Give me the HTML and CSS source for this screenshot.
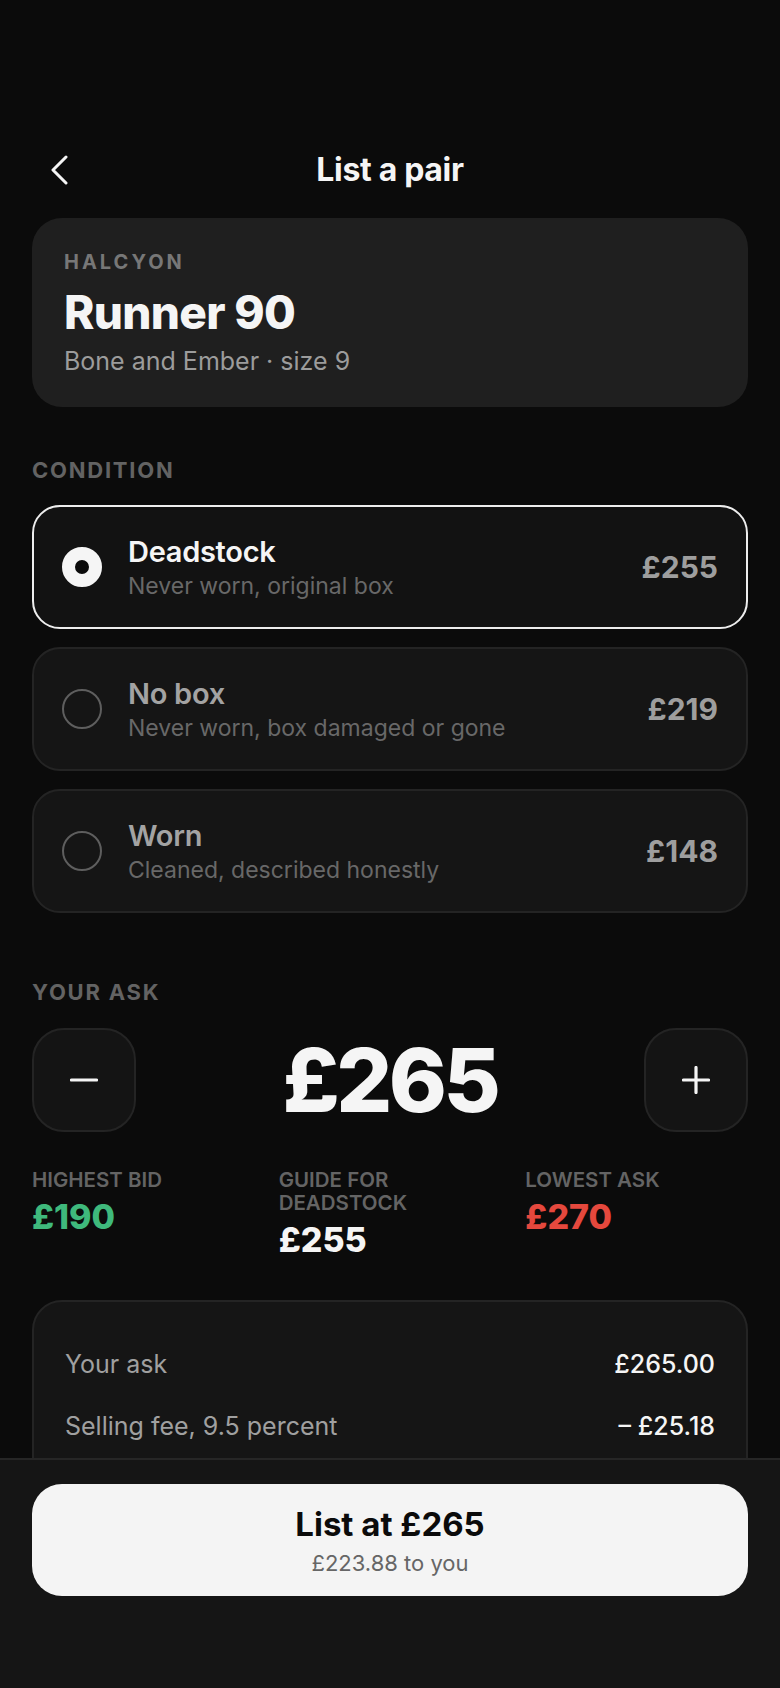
FILE: index.html
```html
<!DOCTYPE html>
<html lang="en">
<head>
<meta charset="utf-8">
<title>List a pair</title>
<link rel="stylesheet" href="styles.css">
</head>
<body>
<div class="screen">
  <header class="topbar">
    <button class="back" aria-label="Back">
      <svg width="18" height="30" viewBox="0 0 18 30" fill="none"><path d="M15 2 L2 15 L15 28" stroke="#f5f5f5" stroke-width="3" stroke-linecap="round" stroke-linejoin="round"/></svg>
    </button>
    <h1 class="title">List a pair</h1>
    <span class="spacer"></span>
  </header>

  <section class="product">
    <div class="brand">HALCYON</div>
    <div class="model">Runner 90</div>
    <div class="variant">Bone and Ember · size 9</div>
  </section>

  <div class="section-label cond-label">CONDITION</div>
  <div class="options">
    <div class="option selected">
      <span class="radio"></span>
      <div class="opt-text">
        <div class="opt-title">Deadstock</div>
        <div class="opt-sub">Never worn, original box</div>
      </div>
      <div class="opt-price">£255</div>
    </div>
    <div class="option">
      <span class="radio"></span>
      <div class="opt-text">
        <div class="opt-title">No box</div>
        <div class="opt-sub">Never worn, box damaged or gone</div>
      </div>
      <div class="opt-price">£219</div>
    </div>
    <div class="option">
      <span class="radio"></span>
      <div class="opt-text">
        <div class="opt-title">Worn</div>
        <div class="opt-sub">Cleaned, described honestly</div>
      </div>
      <div class="opt-price">£148</div>
    </div>
  </div>

  <div class="section-label ask-label">YOUR ASK</div>
  <div class="stepper">
    <button class="step" aria-label="Decrease">
      <svg width="28" height="28" viewBox="0 0 28 28"><path d="M1.5 14 H26.5" stroke="#f5f5f5" stroke-width="3.2" stroke-linecap="round"/></svg>
    </button>
    <div class="ask-value">£265</div>
    <button class="step" aria-label="Increase">
      <svg width="28" height="28" viewBox="0 0 28 28"><path d="M1.5 14 H26.5 M14 1.5 V26.5" stroke="#f5f5f5" stroke-width="3.2" stroke-linecap="round"/></svg>
    </button>
  </div>

  <div class="stats">
    <div class="stat">
      <div class="stat-label">HIGHEST BID</div>
      <div class="stat-value green">£190</div>
    </div>
    <div class="stat">
      <div class="stat-label">GUIDE FOR DEADSTOCK</div>
      <div class="stat-value">£255</div>
    </div>
    <div class="stat">
      <div class="stat-label">LOWEST ASK</div>
      <div class="stat-value red">£270</div>
    </div>
  </div>

  <section class="fees">
    <div class="fee-row"><span class="fee-label">Your ask</span><span class="fee-val">£265.00</span></div>
    <div class="fee-row"><span class="fee-label">Selling fee, 9.5 percent</span><span class="fee-val">– £25.18</span></div>
    <div class="fee-row"><span class="fee-label">Shipping to us</span><span class="fee-val">– £15.94</span></div>
    <div class="fee-row total"><span class="fee-label">You receive</span><span class="fee-val">£223.88</span></div>
  </section>
</div>

<footer class="bottom">
  <button class="cta">
    <span class="cta-title">List at £265</span>
    <span class="cta-sub">£223.88 to you</span>
  </button>
</footer>
</body>
</html>
```

FILE: styles.css
```css
* { box-sizing: border-box; }

html, body {
  margin: 0;
  padding: 0;
  background: #0b0b0b;
  color: #f5f5f5;
  font-family: Inter, "Noto Sans", "Liberation Sans", sans-serif;
}

button {
  font-family: inherit;
  border: none;
  background: none;
  padding: 0;
  color: inherit;
  cursor: pointer;
}

.screen {
  padding: 140px 32px 260px;
}

.topbar {
  height: 60px;
  display: grid;
  grid-template-columns: 56px 1fr 56px;
  align-items: center;
}

.back {
  width: 56px;
  height: 56px;
  display: flex;
  align-items: center;
  justify-content: center;
}

.title {
  margin: 0;
  text-align: center;
  font-size: 32px;
  font-weight: 700;
  letter-spacing: -0.01em;
  line-height: 40px;
}

.product {
  margin-top: 18px;
  background: #1f1f1f;
  border-radius: 30px;
  padding: 32px 32px 31px;
}

.brand {
  font-size: 20px;
  line-height: 24px;
  font-weight: 700;
  letter-spacing: 0.15em;
  color: #777;
}

.model {
  margin-top: 12px;
  font-size: 46px;
  line-height: 52px;
  font-weight: 800;
  letter-spacing: -0.015em;
  color: #f5f5f5;
}

.variant {
  margin-top: 8px;
  font-size: 25px;
  line-height: 30px;
  color: #9c9c9c;
}

.section-label {
  font-size: 22px;
  line-height: 28px;
  font-weight: 700;
  letter-spacing: 0.08em;
  color: #636363;
}

.cond-label { margin-top: 49px; }

.options {
  margin-top: 21px;
  display: flex;
  flex-direction: column;
  gap: 18px;
}

.option {
  height: 124px;
  display: flex;
  align-items: center;
  gap: 26px;
  padding: 0 28px;
  background: #151515;
  border: 2px solid #242424;
  border-radius: 28px;
}

.option.selected {
  background: #121212;
  border-color: #ededed;
}

.radio {
  flex: none;
  width: 40px;
  height: 40px;
  border-radius: 50%;
  border: 2px solid #5e5e5e;
}

.selected .radio {
  border: 13px solid #f5f5f5;
  background: #0b0b0b;
}

.opt-text {
  flex: 1;
  display: flex;
  flex-direction: column;
  gap: 3px;
}

.opt-title {
  font-size: 29px;
  line-height: 34px;
  font-weight: 600;
  letter-spacing: -0.01em;
  color: #a3a3a3;
}

.selected .opt-title { color: #f5f5f5; }

.opt-sub {
  font-size: 23px;
  line-height: 28px;
  color: #686868;
}

.opt-price {
  font-size: 30px;
  font-weight: 700;
  color: #9e9e9e;
}

.ask-label { margin-top: 65px; }

.stepper {
  margin-top: 22px;
  display: flex;
  align-items: center;
  justify-content: space-between;
}

.step {
  width: 104px;
  height: 104px;
  border-radius: 32px;
  background: #141414;
  border: 2px solid #242424;
  display: flex;
  align-items: center;
  justify-content: center;
}

.ask-value {
  font-size: 88px;
  line-height: 104px;
  font-weight: 800;
  letter-spacing: -0.04em;
  color: #f5f5f5;
}

.stats {
  margin-top: 36px;
  display: grid;
  grid-template-columns: repeat(3, 1fr);
  gap: 24px;
}

.stat-label {
  font-size: 20.5px;
  line-height: 23px;
  font-weight: 600;
  color: #646464;
  padding-right: 40px;
}

.stat-value {
  margin-top: 7px;
  font-size: 34px;
  line-height: 38px;
  font-weight: 800;
  letter-spacing: 0;
  color: #f5f5f5;
}

.stat-value.green { color: #3fb97c; }
.stat-value.red { color: #e5483d; }

.fees {
  margin-top: 41px;
  background: #151515;
  border: 2px solid #242424;
  border-radius: 30px;
  padding: 46px 31px 40px;
  display: flex;
  flex-direction: column;
  gap: 30px;
}

.fee-row {
  display: flex;
  justify-content: space-between;
  font-size: 25px;
  line-height: 32px;
}

.fee-label { color: #a0a0a0; }
.fee-val { color: #f5f5f5; font-weight: 500; }

.bottom {
  position: fixed;
  left: 0;
  right: 0;
  bottom: 0;
  height: 230px;
  background: #151515;
  border-top: 2px solid #262626;
  padding: 24px 32px 0;
}

.cta {
  width: 100%;
  height: 112px;
  border-radius: 30px;
  background: #f4f4f4;
  display: flex;
  flex-direction: column;
  align-items: center;
  justify-content: center;
  gap: 7px;
}

.cta-title {
  font-size: 33px;
  line-height: 38px;
  font-weight: 700;
  color: #0b0b0b;
}

.cta-sub {
  font-size: 22px;
  line-height: 26px;
  color: #666;
}
```
